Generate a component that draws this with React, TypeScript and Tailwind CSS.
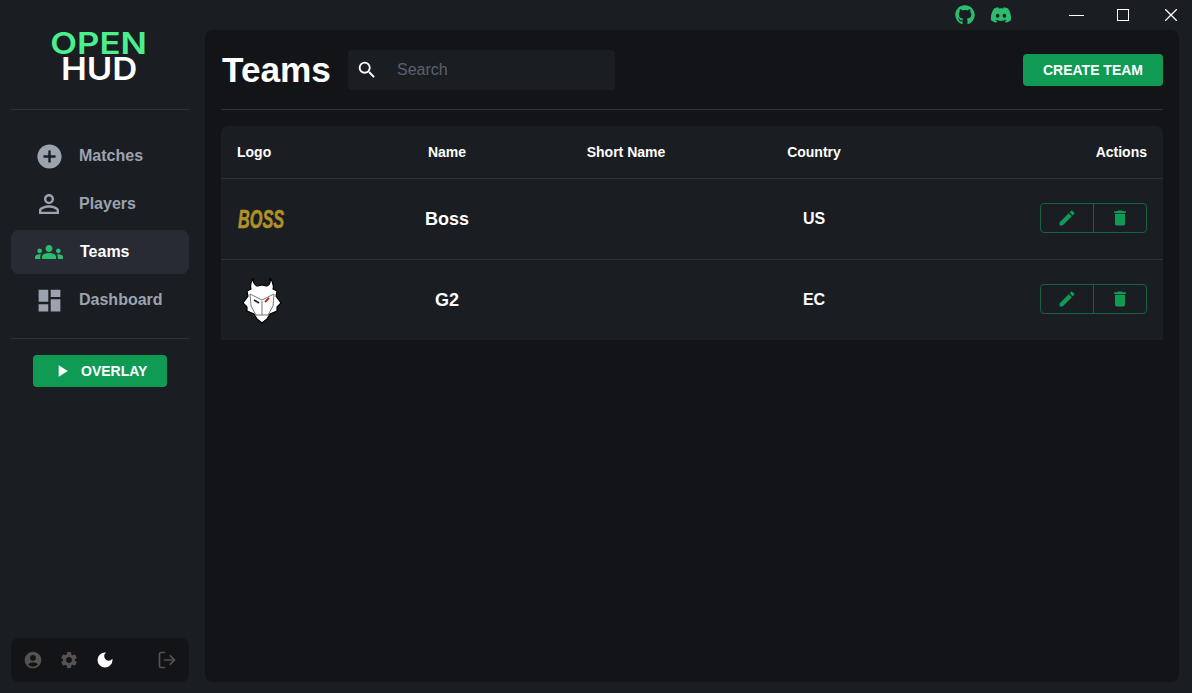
import { LogOut } from "lucide-react"
import { FaDiscord, FaGithub } from "react-icons/fa"
import {
    MdAccountCircle,
    MdAddCircle,
    MdDarkMode,
    MdDashboard,
    MdDelete,
    MdEdit,
    MdGroups,
    MdPersonOutline,
    MdPlayArrow,
    MdSearch,
    MdSettings,
} from "react-icons/md"

const navItems = [
    { label: "Matches", icon: <MdAddCircle size={29} /> },
    { label: "Players", icon: <MdPersonOutline size={30} /> },
    { label: "Teams", icon: <MdGroups size={28} />, active: true },
    { label: "Dashboard", icon: <MdDashboard size={29} /> },
]

function G2Logo() {
    return (
        <svg width="55" height="60" viewBox="0 0 55 60">
            <path
                d="M18 8 C18 13 20 15 22 16 L27 15 L32 16 C34 15 36 13 35 8 C38 12 39 16 38 19 L42 21 L41 26 L46 33 L42 37 L42 41 L35 44 L32 49 L27 53 L22 49 L19 44 L12 41 L12 37 L8 33 L13 26 L12 21 L16 19 C15 16 16 12 18 8 Z"
                fill="#fff"
                stroke="#000"
                strokeWidth="1.2"
            />
            <path d="M15 24 L27 30 L39 24 L38 36 L33 45 L21 45 L16 36 Z" fill="none" stroke="#777" strokeWidth="1" />
            <path d="M27 31 V45" stroke="#777" strokeWidth="1" />
            <path d="M19 30 L24 33" stroke="#222" strokeWidth="1.8" />
            <path d="M30 32 L34 28" stroke="#c02020" strokeWidth="1.8" />
        </svg>
    )
}

function Actions() {
    return (
        <div className="inline-flex h-[30px] w-[107px] rounded border border-[#14633c] text-[#0f9b54]">
            <div className="flex w-[53px] items-center justify-center border-r border-[#14633c]">
                <MdEdit size={20} />
            </div>
            <div className="flex flex-1 items-center justify-center">
                <MdDelete size={20} />
            </div>
        </div>
    )
}

function TeamRow({ logo, name, country }: { logo: React.ReactNode; name: string; country: string }) {
    return (
        <tr className="h-[81px] border-t border-[#2e3136]">
            <td className="pl-4">{logo}</td>
            <td className="text-center text-lg font-bold">{name}</td>
            <td></td>
            <td className="text-center text-base font-bold">{country}</td>
            <td className="pr-4 text-right">
                <Actions />
            </td>
        </tr>
    )
}

export default function App() {
    return (
        <div className="flex h-screen bg-[#1a1d22] font-['Liberation_Sans',sans-serif] text-white">
            <aside className="flex w-[205px] shrink-0 flex-col pb-[11px] pl-[11px] pr-4">
                <div className="flex h-[110px] flex-col items-center border-b border-[#2e3136] pr-[2px] pt-[31px] font-['Inter',sans-serif]">
                    <div className="scale-x-[1.16] text-[30px] leading-[25px] font-semibold text-[#4bef8b]">OPEN</div>
                    <div className="scale-x-[1.12] text-[31px] leading-[25px] font-semibold">HUD</div>
                </div>
                <nav className="flex flex-col gap-1 border-b border-[#2e3136] pb-[16px] pt-[24px]">
                    {navItems.map((item) => (
                        <div
                            key={item.label}
                            className={`flex h-[44px] items-center rounded-lg ${item.active ? "bg-[#282b34] text-white" : "text-[#9ca3af]"}`}
                        >
                            <span
                                className={`flex w-[76px] shrink-0 justify-center ${item.active ? "text-[#2bbd6e]" : ""}`}
                            >
                                {item.icon}
                            </span>
                            <span className={`text-base font-bold ${item.active ? "ml-[-7px]" : "ml-[-8px]"}`}>
                                {item.label}
                            </span>
                        </div>
                    ))}
                </nav>
                <div className="mt-4 flex justify-center">
                    <button className="flex h-8 w-[134px] items-center gap-[9px] rounded bg-[#0f9b54] pl-[19px] text-sm font-bold text-white">
                        <MdPlayArrow size={20} />
                        OVERLAY
                    </button>
                </div>
                <div className="mt-auto flex h-11 items-center rounded-lg bg-[#131417] pl-[12px] pr-[12px] text-[#56524f]">
                    <div className="flex items-center gap-4">
                        <MdAccountCircle size={20} />
                        <MdSettings size={20} />
                        <MdDarkMode size={20} className="text-white" />
                    </div>
                    <LogOut size={20} className="ml-auto" />
                </div>
            </aside>

            <div className="flex min-w-0 flex-1 flex-col pb-[11px] pr-[13px]">
                <header className="flex h-[30px] shrink-0 items-center">
                    <div className="ml-[750px] flex items-center gap-[15px] text-[#2bbd6e]">
                        <FaGithub size={20} />
                        <FaDiscord size={22} />
                    </div>
                    <div className="ml-[57px] flex items-center gap-[33px] text-white">
                        <div className="h-px w-[15px] bg-white"></div>
                        <div className="h-3 w-3 border border-white"></div>
                        <svg width="12" height="12" viewBox="0 0 12 12" stroke="currentColor" strokeWidth="1.3" className="ml-[3px]">
                            <path d="M0 0 L12 12 M12 0 L0 12" />
                        </svg>
                    </div>
                </header>

                <main className="flex-1 rounded-lg bg-[#131417] px-4">
                    <div className="flex h-[80px] items-center justify-between border-b border-[#2e3136]">
                        <div className="flex items-center">
                            <h1 className="w-[127px] pl-[1px] text-[35.2px] leading-[52px] font-bold">Teams</h1>
                            <div className="mt-[1px] flex h-10 w-[267px] items-center rounded bg-[#1a1d22] pl-[8px] text-[#5b6270]">
                                <MdSearch size={22} className="text-white" />
                                <span className="ml-[19px] text-base">Search</span>
                            </div>
                        </div>
                        <button className="h-8 w-[140px] rounded bg-[#0f9b54] text-sm font-bold text-white">
                            CREATE TEAM
                        </button>
                    </div>

                    <div className="mt-4 overflow-hidden rounded-t-lg bg-[#1a1d22]">
                        <table className="w-full table-fixed border-collapse">
                            <colgroup>
                                <col className="w-[150px]" />
                                <col className="w-[152px]" />
                                <col className="w-[206px]" />
                                <col className="w-[170px]" />
                                <col />
                            </colgroup>
                            <thead>
                                <tr className="h-[52px] text-sm font-bold">
                                    <th className="pl-4 text-left">Logo</th>
                                    <th>Name</th>
                                    <th>Short Name</th>
                                    <th>Country</th>
                                    <th className="pr-4 text-right">Actions</th>
                                </tr>
                            </thead>
                            <tbody>
                                <TeamRow
                                    name="Boss"
                                    country="US"
                                    logo={
                                        <span className="ml-[1px] mt-[2px] inline-block origin-left scale-x-[0.65] text-[25px] font-bold italic text-[#b0902a] [-webkit-text-stroke:0.6px_#b0902a]">
                                            BOSS
                                        </span>
                                    }
                                />
                                <TeamRow
                                    name="G2"
                                    country="EC"
                                    logo={
                                        <div className="ml-[-2px] flex">
                                            <G2Logo />
                                        </div>
                                    }
                                />
                            </tbody>
                        </table>
                    </div>
                </main>
            </div>
        </div>
    )
}
